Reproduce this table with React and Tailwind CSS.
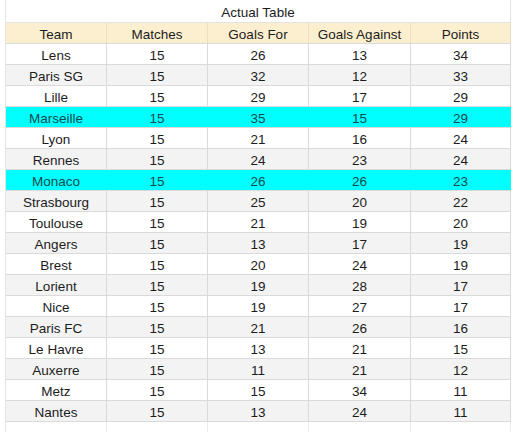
import React from 'react';

const rows = [
  ['Lens', 15, 26, 13, 34],
  ['Paris SG', 15, 32, 12, 33],
  ['Lille', 15, 29, 17, 29],
  ['Marseille', 15, 35, 15, 29],
  ['Lyon', 15, 21, 16, 24],
  ['Rennes', 15, 24, 23, 24],
  ['Monaco', 15, 26, 26, 23],
  ['Strasbourg', 15, 25, 20, 22],
  ['Toulouse', 15, 21, 19, 20],
  ['Angers', 15, 13, 17, 19],
  ['Brest', 15, 20, 24, 19],
  ['Lorient', 15, 19, 28, 17],
  ['Nice', 15, 19, 27, 17],
  ['Paris FC', 15, 21, 26, 16],
  ['Le Havre', 15, 13, 21, 15],
  ['Auxerre', 15, 11, 21, 12],
  ['Metz', 15, 15, 34, 11],
  ['Nantes', 15, 13, 24, 11],
];

const highlighted = ['Marseille', 'Monaco'];
const widths = ['w-[101px]', 'w-[101px]', 'w-[101px]', 'w-[102px]', 'w-[100px]'];
const headers = ['Team', 'Matches', 'Goals For', 'Goals Against', 'Points'];

function Row({ cells, bg, text = 'text-[#1c1c1c]', lines = 'border-[#dadada]' }) {
  return (
    <div className={`flex h-[21px] border-b border-[#dadada] ${bg}`}>
      {cells.map((c, i) => (
        <div
          key={i}
          className={`${widths[i]} flex items-center justify-center pt-[3px] border-r ${lines} ${text}`}
        >
          {c}
        </div>
      ))}
    </div>
  );
}

export default function App() {
  return (
    <div
      className="w-[519px] h-[432px] bg-white overflow-hidden pl-[5px] text-[13.5px] leading-none"
      style={{ fontFamily: '"Liberation Sans", Arial, sans-serif' }}
    >
      <div className="w-[506px] border-l border-[#e3e3e3]">
        <div className="flex h-[23px] items-center justify-center border-r border-b border-[#e3e3e3] text-[#1c1c1c] pt-[3px]">
          Actual Table
        </div>
        <Row cells={headers} bg="bg-[#fcefcf]" lines="border-[#eadfc3]" />
        {rows.map((r, i) => {
          const hl = highlighted.includes(r[0]);
          const bg = hl ? 'bg-[#00ffff]' : i % 2 === 1 ? 'bg-[#f3f3f3]' : 'bg-white';
          return (
            <Row
              key={r[0]}
              cells={r}
              bg={bg}
              text={hl ? 'text-[#0e4a4c]' : 'text-[#1c1c1c]'}
              lines={hl ? 'border-[#00ffff]' : 'border-[#dadada]'}
            />
          );
        })}
        <div className="flex h-[12px]">
          {widths.map((w, i) => (
            <div key={i} className={`${w} border-r border-[#ececec]`} />
          ))}
        </div>
      </div>
    </div>
  );
}
